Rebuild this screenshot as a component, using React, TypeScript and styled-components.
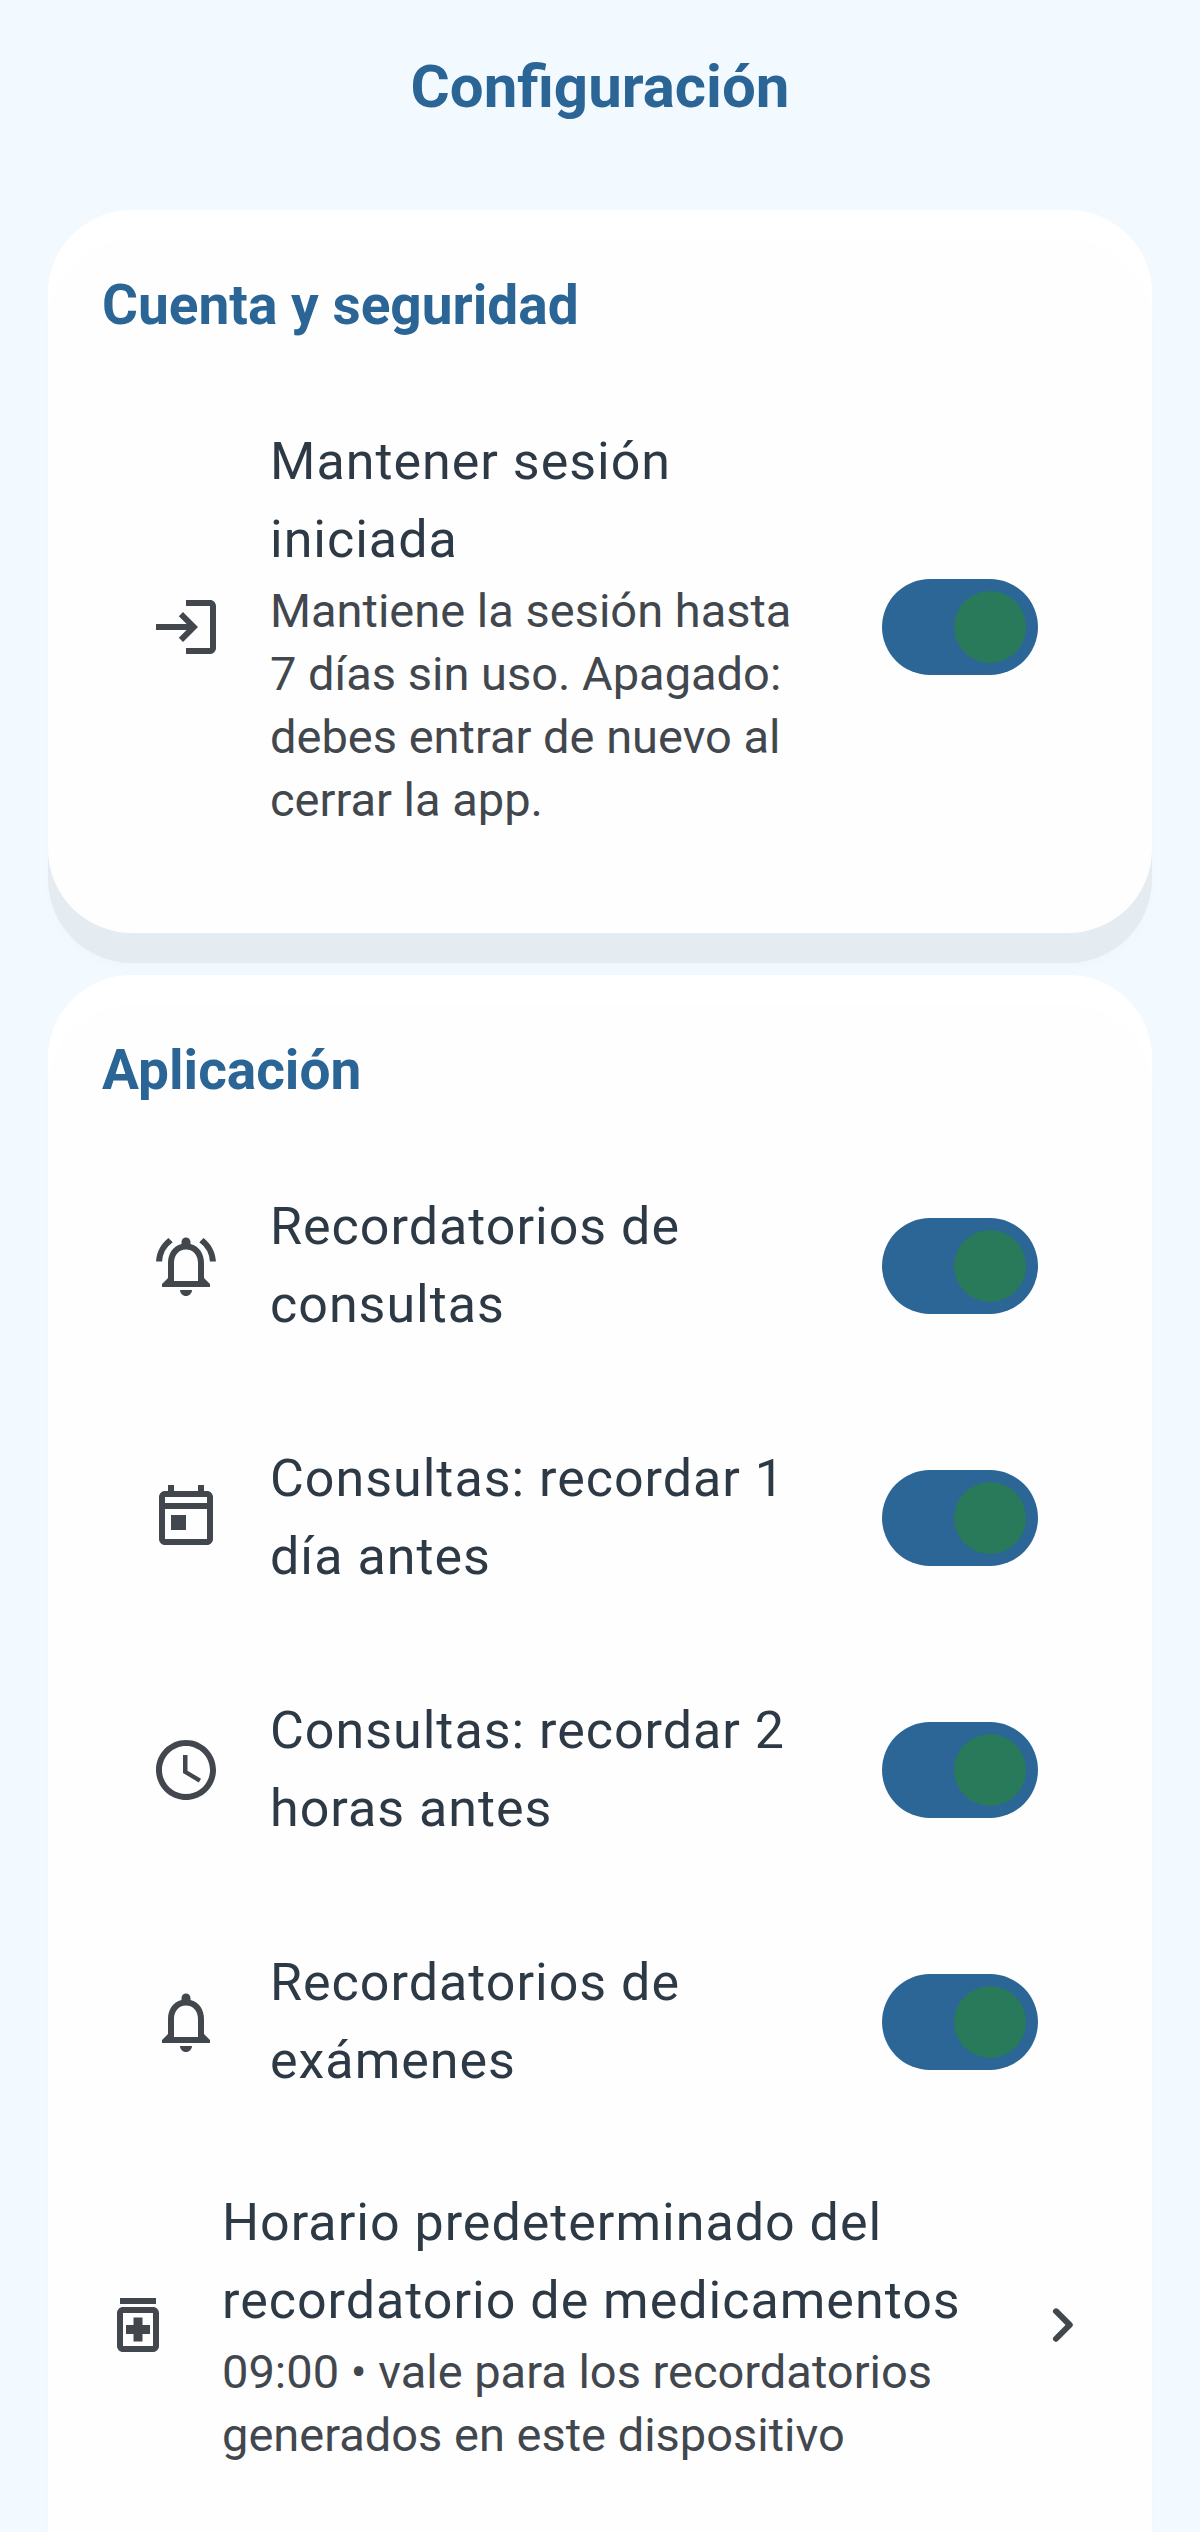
import React, { useId } from 'react';
import styled, { createGlobalStyle } from 'styled-components';

const GlobalStyle = createGlobalStyle`
  * { box-sizing: border-box; }
  body {
    margin: 0;
    background: #f2f9ff;
    font-family: Roboto, 'Noto Sans', sans-serif;
  }
`;

const Screen = styled.div`
  height: 100vh;
  overflow-y: auto;
  scrollbar-width: none;
  background: #f2f9ff;
`;

const Header = styled.header`
  padding: 42px 48px 78px;
  text-align: center;
`;

const ScreenTitle = styled.h1`
  margin: 0;
  font-size: 60px;
  line-height: 90px;
  font-weight: 700;
  color: #2b6596;
`;

const Sections = styled.main`
  display: flex;
  flex-direction: column;
  gap: 42px;
  padding: 0 48px 48px;
`;

const Card = styled.section<{ $roomy?: boolean }>`
  padding: 54px 54px ${({ $roomy }) => ($roomy ? '162px' : '54px')};
  border-radius: 84px;
  background: #fefefe;
  box-shadow: inset 0 30px 0 #ffffff, 0 30px 0 #e4ebf1, 0 36px 12px -6px #ecf4ff;
`;

const SectionTitle = styled.h2`
  margin: 0 0 28px;
  font-size: 55px;
  line-height: 83px;
  font-weight: 700;
  color: #2b6596;
`;

const SwitchRow = styled.label`
  display: flex;
  align-items: center;
  gap: 48px;
  padding: 48px;
  cursor: pointer;
`;

const LinkRow = styled.button`
  display: flex;
  align-items: center;
  gap: 48px;
  width: 100%;
  padding: 36px 0;
  border: 0;
  background: none;
  font: inherit;
  text-align: left;
  cursor: pointer;
`;

const Glyph = styled.svg`
  flex: none;
  width: 72px;
  height: 72px;
  fill: #42474e;
`;

const Texts = styled.span`
  flex: 1;
  min-width: 0;
  display: flex;
  flex-direction: column;
`;

const RowTitle = styled.span`
  font-size: 52px;
  line-height: 78px;
  letter-spacing: 1px;
  color: #2d3a46;
`;

const RowDetail = styled.span`
  font-size: 47px;
  line-height: 63px;
  color: #42474e;
`;

const Toggle = styled.input.attrs({ type: 'checkbox', role: 'switch' })`
  appearance: none;
  flex: none;
  display: flex;
  justify-content: flex-start;
  width: 156px;
  height: 96px;
  margin: 0 12px;
  padding: 12px;
  border-radius: 48px;
  background: #c2c7cf;
  cursor: pointer;

  &::before {
    content: '';
    width: 72px;
    height: 72px;
    border-radius: 50%;
    background: #ffffff;
  }

  &:checked {
    justify-content: flex-end;
    background: #2c6697;
  }

  &:checked::before {
    background: #297a5a;
  }
`;

const BELL =
  'M12 22c1.1 0 2-.9 2-2h-4c0 1.1.9 2 2 2zm6-6v-5c0-3.07-1.63-5.64-4.5-6.32V4c0-.83-.67-1.5-1.5-1.5s-1.5.67-1.5 1.5v.68C7.64 5.36 6 7.92 6 11v5l-2 2v1h16v-1l-2-2zm-2 1H8v-6c0-2.48 1.51-4.5 4-4.5s4 2.02 4 4.5v6z';

const ICONS = {
  login:
    'M11 7 9.6 8.4l2.6 2.6H2v2h10.2l-2.6 2.6L11 17l5-5-5-5zm9 12h-8v2h8c1.1 0 2-.9 2-2V5c0-1.1-.9-2-2-2h-8v2h8v14z',
  bell: BELL,
  bellActive:
    BELL +
    'M7.58 4.08 6.15 2.65C3.75 4.48 2.17 7.3 2.03 10.5h2a8.445 8.445 0 0 1 3.55-6.42zm12.39 6.42h2c-.15-3.2-1.73-6.02-4.12-7.85l-1.42 1.43a8.495 8.495 0 0 1 3.54 6.42z',
  today:
    'M19 3h-1V1h-2v2H8V1H6v2H5c-1.1 0-2 .9-2 2v14c0 1.1.9 2 2 2h14c1.1 0 2-.9 2-2V5c0-1.1-.9-2-2-2zm0 16H5V9h14v10zm0-12H5V5h14v2zM7 11h5v5H7z',
  clock:
    'M12 2C6.5 2 2 6.5 2 12s4.5 10 10 10 10-4.5 10-10S17.5 2 12 2zm0 18c-4.4 0-8-3.6-8-8s3.6-8 8-8 8 3.6 8 8-3.6 8-8 8zm.5-13H11v6l5.25 3.15.75-1.23-4.5-2.67z',
  medication:
    'M6 3h12v2H6zm11 3H7c-1.1 0-2 .9-2 2v11c0 1.1.9 2 2 2h10c1.1 0 2-.9 2-2V8c0-1.1-.9-2-2-2zm0 13H7V8h10v11zM10.5 17.5h3V15H16v-3h-2.5V9.5h-3V12H8v3h2.5z',
  chevron:
    'M9.29 6.71a.996.996 0 0 0 0 1.41L13.17 12l-3.88 3.88a.996.996 0 1 0 1.41 1.41l4.59-4.59a.996.996 0 0 0 0-1.41L10.7 6.7c-.38-.38-1.02-.38-1.41.01z',
};

type IconName = keyof typeof ICONS;

function Icon({ name }: { name: IconName }) {
  return (
    <Glyph viewBox="0 0 24 24" aria-hidden="true">
      <path fillRule="evenodd" d={ICONS[name]} />
    </Glyph>
  );
}

function SwitchItem({ icon, title, detail }: { icon: IconName; title: string; detail?: string }) {
  const id = useId();
  return (
    <SwitchRow htmlFor={id}>
      <Icon name={icon} />
      <Texts>
        <RowTitle>{title}</RowTitle>
        {detail && <RowDetail>{detail}</RowDetail>}
      </Texts>
      <Toggle id={id} defaultChecked />
    </SwitchRow>
  );
}

export default function App() {
  return (
    <Screen>
      <GlobalStyle />
      <Header>
        <ScreenTitle>Configuración</ScreenTitle>
      </Header>
      <Sections>
        <Card>
          <SectionTitle>Cuenta y seguridad</SectionTitle>
          <SwitchItem
            icon="login"
            title="Mantener sesión iniciada"
            detail={'Mantiene la sesión hasta 7\u00a0días sin uso. Apagado: debes entrar de nuevo al cerrar la app.'}
          />
        </Card>
        <Card $roomy>
          <SectionTitle>Aplicación</SectionTitle>
          <SwitchItem icon="bellActive" title="Recordatorios de consultas" />
          <SwitchItem icon="today" title="Consultas: recordar 1 día antes" />
          <SwitchItem icon="clock" title="Consultas: recordar 2 horas antes" />
          <SwitchItem icon="bell" title="Recordatorios de exámenes" />
          <LinkRow type="button">
            <Icon name="medication" />
            <Texts>
              <RowTitle>Horario predeterminado del recordatorio de medicamentos</RowTitle>
              <RowDetail>09:00 • vale para los recordatorios generados en este dispositivo</RowDetail>
            </Texts>
            <Icon name="chevron" />
          </LinkRow>
        </Card>
      </Sections>
    </Screen>
  );
}
